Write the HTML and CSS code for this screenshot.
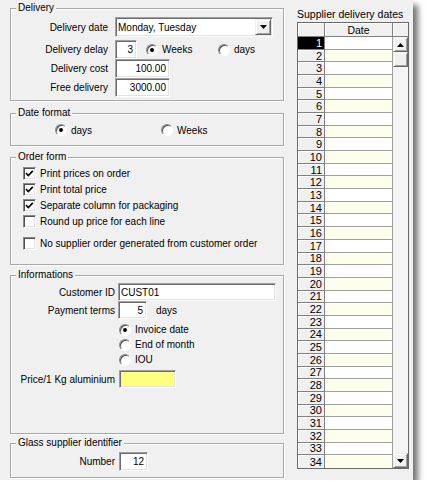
FILE: index.html
```html
<!DOCTYPE html>
<html>
<head>
<meta charset="utf-8">
<link rel="stylesheet" href="styles.css">
</head>
<body>
<div class="window">
  <div class="left">
    <section class="group g-delivery">
      <div class="gtitle">Delivery</div>
      <div class="frow r-combo">
        <span class="lbl l-del">Delivery date</span>
        <div class="field combo"><span class="combo-text">Monday, Tuesday</span><span class="dd-btn"><svg width="7" height="4" viewBox="0 0 7 4"><polygon points="0,0 7,0 3.5,4" fill="#000"/></svg></span></div>
      </div>
      <div class="frow r-delay">
        <span class="lbl l-del">Delivery delay</span>
        <div class="field num w-delay">3</div>
        <span class="opt o-weeks"><span class="radio on"></span><span class="olbl">Weeks</span></span>
        <span class="opt"><span class="radio"></span><span class="olbl">days</span></span>
      </div>
      <div class="frow">
        <span class="lbl l-del">Delivery cost</span>
        <div class="field num w-cost">100.00</div>
      </div>
      <div class="frow">
        <span class="lbl l-del">Free delivery</span>
        <div class="field num w-cost">3000.00</div>
      </div>
    </section>

    <section class="group g-date">
      <div class="gtitle">Date format</div>
      <div class="drow">
        <span class="opt o-days"><span class="radio on"></span><span class="olbl">days</span></span>
        <span class="opt"><span class="radio"></span><span class="olbl">Weeks</span></span>
      </div>
    </section>

    <section class="group g-order">
      <div class="gtitle">Order form</div>
      <div class="cbrow cb-first"><span class="cb"><svg width="11" height="11" viewBox="0 0 11 11"><polyline points="2,5 4.3,7.5 8.8,2.8" fill="none" stroke="#000" stroke-width="1.7"/></svg></span><span class="cblbl">Print prices on order</span></div>
      <div class="cbrow"><span class="cb"><svg width="11" height="11" viewBox="0 0 11 11"><polyline points="2,5 4.3,7.5 8.8,2.8" fill="none" stroke="#000" stroke-width="1.7"/></svg></span><span class="cblbl">Print total price</span></div>
      <div class="cbrow"><span class="cb"><svg width="11" height="11" viewBox="0 0 11 11"><polyline points="2,5 4.3,7.5 8.8,2.8" fill="none" stroke="#000" stroke-width="1.7"/></svg></span><span class="cblbl">Separate column for packaging</span></div>
      <div class="cbrow"><span class="cb"></span><span class="cblbl">Round up price for each line</span></div>
      <div class="cbrow cb-last"><span class="cb"></span><span class="cblbl">No supplier order generated from customer order</span></div>
    </section>

    <section class="group g-info">
      <div class="gtitle">Informations</div>
      <div class="frow r-cust">
        <span class="lbl l-info">Customer ID</span>
        <div class="field w-cust">CUST01</div>
      </div>
      <div class="frow r-pay">
        <span class="lbl l-info">Payment terms</span>
        <div class="field num w-pay">5</div>
        <span class="unit">days</span>
      </div>
      <div class="rrow rr-first"><span class="radio on"></span><span class="olbl">Invoice date</span></div>
      <div class="rrow"><span class="radio"></span><span class="olbl">End of month</span></div>
      <div class="rrow"><span class="radio"></span><span class="olbl">IOU</span></div>
      <div class="frow r-alu">
        <span class="lbl l-info">Price/1 Kg aluminium</span>
        <div class="field yellow"></div>
      </div>
    </section>

    <section class="group g-glass">
      <div class="gtitle">Glass supplier identifier</div>
      <div class="frow r-num">
        <span class="lbl l-glass">Number</span>
        <div class="field num w-pay">12</div>
      </div>
    </section>
  </div>

  <div class="right">
    <div class="rtitle">Supplier delivery dates</div>
    <div class="grid-box">
      <div class="table" id="tbl">
        <div class="c hd"></div><div class="c hd hd-date">Date</div>
      </div>
      <div class="vs">
        <div class="vs-head"></div>
        <div class="sb-btn"><svg width="7" height="4" viewBox="0 0 7 4"><polygon points="3.5,0 7,4 0,4" fill="#000"/></svg></div>
        <div class="sb-btn thumb"></div>
        <div class="sb-track"></div>
        <div class="sb-btn"><svg width="7" height="4" viewBox="0 0 7 4"><polygon points="0,0 7,0 3.5,4" fill="#000"/></svg></div>
      </div>
    </div>
  </div>
</div>
<script>
  (function () {
    var t = document.getElementById('tbl');
    var h = '';
    for (var i = 1; i <= 34; i++) {
      var last = i === 34 ? ' last' : '';
      h += '<div class="c rh' + (i === 1 ? ' sel' : '') + last + '">' + i + '</div>';
      h += '<div class="c dc' + (i % 2 === 0 ? ' cream' : '') + last + '"></div>';
    }
    t.insertAdjacentHTML('beforeend', h);
  })();
</script>
</body>
</html>
```

FILE: styles.css
```css
* { box-sizing: border-box; }
html, body { margin: 0; padding: 0; background: #fff; }
body {
  font-family: "Liberation Sans", Arial, sans-serif;
  font-size: 10px;
  color: #000;
}

.window {
  width: 413px;
  height: 480px;
  background: #f0f0f0;
  box-shadow: 5px 5px 6px rgba(0, 0, 0, 0.55);
  display: flex;
  padding-left: 10px;
}

.left {
  width: 274px;
  display: flex;
  flex-direction: column;
}

/* group boxes */
.group {
  border: 1px solid #a8a8a8;
  box-shadow: inset 1px 1px 0 #fff, 1px 1px 0 #fff;
}
.gtitle {
  margin: -7px 0 0 5px;
  padding: 0 2px;
  width: max-content;
  height: 12px;
  line-height: 12px;
  background: #f0f0f0;
}
.g-delivery { margin-top: 8px; height: 93px; }
.g-date { margin-top: 12px; height: 33px; }
.g-order { margin-top: 11px; height: 108px; }
.g-info { margin-top: 10px; height: 159px; }
.g-glass { margin-top: 9px; height: 35px; }

/* form rows */
.frow {
  display: flex;
  align-items: center;
  height: 19px;
}
.r-combo { margin-top: 3px; height: 20px; }
.r-delay { margin-top: 3px; }
.r-cust { margin-top: 2px; height: 18px; }
.r-pay { height: 18px; }
.r-alu { margin-top: 3px; height: 18px; }
.r-num { margin-top: 3px; }

.lbl { flex: none; text-align: right; white-space: nowrap; }
.l-del { width: 97px; margin-right: 7px; }
.l-info { width: 104px; margin-right: 3px; }
.l-glass { width: 104px; margin-right: 4px; }

.field {
  flex: none;
  height: 100%;
  background: #fff;
  border: 1px solid;
  border-color: #a0a0a0 #fff #fff #a0a0a0;
  box-shadow: inset 1px 1px 0 #6d6d6d, inset -1px -1px 0 #e3e3e3;
  padding: 0 2px;
  display: flex;
  align-items: center;
  white-space: nowrap;
}
.num { justify-content: flex-end; padding-right: 3px; }
.w-delay { width: 22px; }
.w-cost { width: 55px; }
.w-cust { width: 158px; }
.w-pay { width: 29px; }
.yellow { width: 57px; margin-left: 1px; background: #ffff80; }
.unit { margin-left: 9px; }

.combo {
  width: 158px;
  justify-content: space-between;
  padding: 0 1px 0 2px;
}
.dd-btn {
  width: 16px;
  height: 16px;
  background: #f0f0f0;
  border: 1px solid;
  border-color: #f0f0f0 #696969 #696969 #f0f0f0;
  box-shadow: inset 1px 1px 0 #fff, inset -1px -1px 0 #a0a0a0;
  display: flex;
  align-items: center;
  justify-content: center;
}

/* radio buttons */
.opt { display: flex; align-items: center; flex: none; }
.o-weeks { margin-left: 9px; width: 72px; }
.o-days { width: 106px; }
.radio {
  flex: none;
  position: relative;
  width: 12px;
  height: 12px;
  border-radius: 50%;
  background: #fff;
  border: 1px solid;
  border-color: #8a8a8a #fff #fff #8a8a8a;
  box-shadow: inset 1px 1px 0 #505050;
}
.radio.on::after {
  content: "";
  position: absolute;
  left: 3px;
  top: 3px;
  width: 4px;
  height: 4px;
  border-radius: 50%;
  background: #000;
}
.olbl { margin-left: 4px; white-space: nowrap; }

.drow {
  margin-top: 3px;
  height: 16px;
  padding-left: 44px;
  display: flex;
  align-items: center;
}

.rrow {
  height: 15px;
  padding-left: 108px;
  display: flex;
  align-items: center;
}
.rr-first { margin-top: 3px; }

/* checkboxes */
.cbrow {
  height: 16px;
  padding-left: 12px;
  display: flex;
  align-items: center;
}
.cb-first { margin-top: 2px; }
.cb-last { margin-top: 6px; }
.cb {
  flex: none;
  width: 13px;
  height: 13px;
  background: #fff;
  border: 1px solid;
  border-color: #8a8a8a #fff #fff #8a8a8a;
  box-shadow: inset 1px 1px 0 #505050, inset -1px -1px 0 #e3e3e3;
  display: flex;
  align-items: center;
  justify-content: center;
}
.cb svg { display: block; }
.cblbl { margin-left: 4px; white-space: nowrap; }

/* right column: grid */
.right {
  margin-left: 13px;
  width: 112px;
  padding-top: 8px;
}
.rtitle {
  height: 12px;
  line-height: 12px;
  font-size: 10.5px;
  white-space: nowrap;
}
.grid-box {
  margin-top: 2px;
  height: 447px;
  border: 1px solid #696969;
  display: flex;
}
.table {
  width: 95px;
  display: grid;
  grid-template-columns: 27px 68px;
  grid-template-rows: 14px repeat(34, 1fr);
}
.c {
  border-right: 1px solid #a0a0a0;
  border-bottom: 1px solid #a0a0a0;
  min-height: 0;
}
.c.last { border-bottom: none; }
.hd {
  background: #f0f0f0;
  border-color: #808080;
  box-shadow: inset 1px 1px 0 #fff;
}
.hd-date {
  font-size: 10.5px;
  display: flex;
  align-items: center;
  justify-content: center;
}
.rh {
  background: #f0f0f0;
  border-color: #808080;
  box-shadow: inset 1px 1px 0 #fff;
  font-size: 11px;
  display: flex;
  align-items: center;
  justify-content: flex-end;
  padding-right: 2px;
}
.rh.sel { background: #000; color: #fff; box-shadow: none; }
.dc { background: #fff; }
.dc.cream { background: #fefeec; }

.vs {
  width: 15px;
  display: flex;
  flex-direction: column;
}
.vs-head {
  height: 14px;
  flex: none;
  background: #f0f0f0;
  border-bottom: 1px solid #808080;
  box-shadow: inset 1px 1px 0 #fff;
}
.sb-btn {
  flex: none;
  height: 15px;
  background: #f0f0f0;
  border: 1px solid;
  border-color: #f0f0f0 #696969 #696969 #f0f0f0;
  box-shadow: inset 1px 1px 0 #fff, inset -1px -1px 0 #a0a0a0;
  display: flex;
  align-items: center;
  justify-content: center;
}
.sb-btn svg { display: block; }
.sb-track { flex: 1; background: #f5f5f5; }
```
